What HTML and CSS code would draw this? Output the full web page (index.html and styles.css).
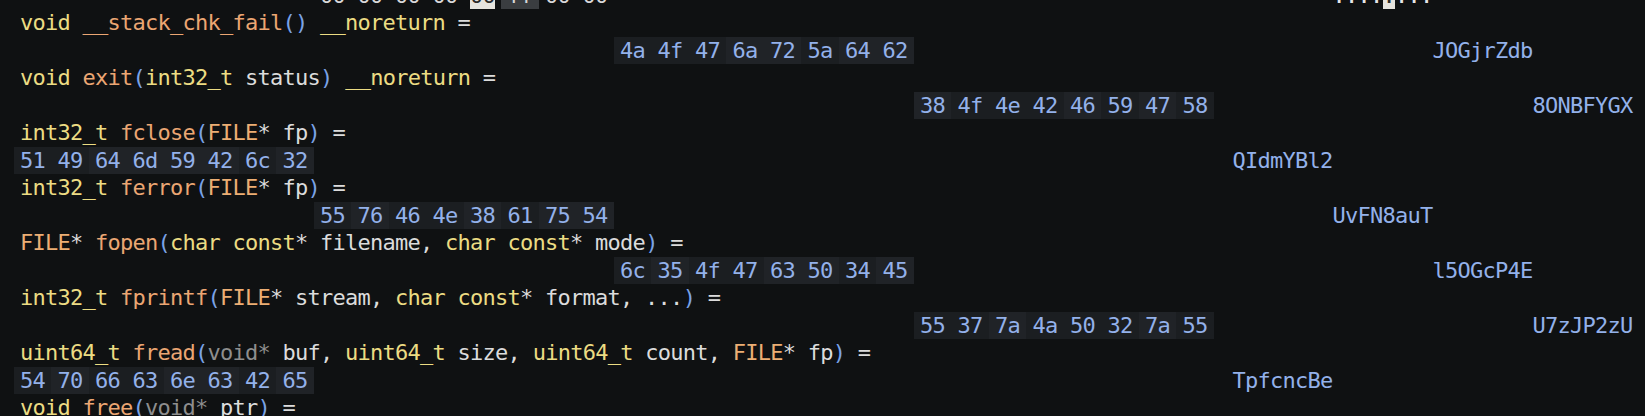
FILE: index.html
```html
<!DOCTYPE html>
<html>
<head>
<meta charset="utf-8">
<link rel="stylesheet" href="styles.css">
</head>
<body>
<div class="view">
  <div class="line hexrow">
    <div class="hexarea"><div class="group at24 plain"><span class="b">00</span><span class="b">00</span><span class="b">00</span><span class="b">00</span><span class="b"><span class="cursor">00</span></span><span class="b sel">ff</span><span class="b">00</span><span class="b">00</span></div></div>
    <div class="ascii a24 dots">....<span class="cursor">.</span>...</div>
  </div>
  <div class="line code"><span class="kw">void</span> <span class="fn">__stack_chk_fail</span><span class="p">()</span> <span class="kw">__noreturn</span> =</div>
  <div class="line hexrow">
    <div class="hexarea"><div class="group at48"><span class="b s1">4a</span><span class="b s1">4f</span><span class="b s1">47</span><span class="b s2">6a</span><span class="b s2">72</span><span class="b s1">5a</span><span class="b s2">64</span><span class="b s2">62</span></div></div>
    <div class="ascii a48">JOGjrZdb</div>
  </div>
  <div class="line code"><span class="kw">void</span> <span class="fn">exit</span><span class="p">(</span><span class="kw">int32_t</span> status<span class="p">)</span> <span class="kw">__noreturn</span> =</div>
  <div class="line hexrow">
    <div class="hexarea"><div class="group at72"><span class="b s2">38</span><span class="b s1">4f</span><span class="b s1">4e</span><span class="b s1">42</span><span class="b s2">46</span><span class="b s1">59</span><span class="b s2">47</span><span class="b s1">58</span></div></div>
    <div class="ascii a72">8ONBFYGX</div>
  </div>
  <div class="line code"><span class="kw">int32_t</span> <span class="fn">fclose</span><span class="p">(</span><span class="ty">FILE</span>* fp<span class="p">)</span> =</div>
  <div class="line hexrow">
    <div class="hexarea"><div class="group at0"><span class="b s1">51</span><span class="b s1">49</span><span class="b s2">64</span><span class="b s2">6d</span><span class="b s2">59</span><span class="b s2">42</span><span class="b s1">6c</span><span class="b s2">32</span></div></div>
    <div class="ascii a0">QIdmYBl2</div>
  </div>
  <div class="line code"><span class="kw">int32_t</span> <span class="fn">ferror</span><span class="p">(</span><span class="ty">FILE</span>* fp<span class="p">)</span> =</div>
  <div class="line hexrow">
    <div class="hexarea"><div class="group at24"><span class="b s1">55</span><span class="b s2">76</span><span class="b s1">46</span><span class="b s1">4e</span><span class="b s2">38</span><span class="b s1">61</span><span class="b s2">75</span><span class="b s2">54</span></div></div>
    <div class="ascii a24">UvFN8auT</div>
  </div>
  <div class="line code"><span class="ty">FILE</span>* <span class="fn">fopen</span><span class="p">(</span><span class="kw">char const</span>* filename, <span class="kw">char const</span>* mode<span class="p">)</span> =</div>
  <div class="line hexrow">
    <div class="hexarea"><div class="group at48"><span class="b s1">6c</span><span class="b s2">35</span><span class="b s1">4f</span><span class="b s1">47</span><span class="b s2">63</span><span class="b s2">50</span><span class="b s1">34</span><span class="b s2">45</span></div></div>
    <div class="ascii a48">l5OGcP4E</div>
  </div>
  <div class="line code"><span class="kw">int32_t</span> <span class="fn">fprintf</span><span class="p">(</span><span class="ty">FILE</span>* stream, <span class="kw">char const</span>* format, ...<span class="p">)</span> =</div>
  <div class="line hexrow">
    <div class="hexarea"><div class="group at72"><span class="b s1">55</span><span class="b s1">37</span><span class="b s2">7a</span><span class="b s1">4a</span><span class="b s1">50</span><span class="b s1">32</span><span class="b s2">7a</span><span class="b s1">55</span></div></div>
    <div class="ascii a72">U7zJP2zU</div>
  </div>
  <div class="line code"><span class="kw">uint64_t</span> <span class="fn">fread</span><span class="p">(</span><span class="dim">void*</span> buf, <span class="kw">uint64_t</span> size, <span class="kw">uint64_t</span> count, <span class="ty">FILE</span>* fp<span class="p">)</span> =</div>
  <div class="line hexrow">
    <div class="hexarea"><div class="group at0"><span class="b s1">54</span><span class="b s2">70</span><span class="b s1">66</span><span class="b s1">63</span><span class="b s2">6e</span><span class="b s2">63</span><span class="b s1">42</span><span class="b s2">65</span></div></div>
    <div class="ascii a0">TpfcncBe</div>
  </div>
  <div class="line code"><span class="kw">void</span> <span class="fn">free</span><span class="p">(</span><span class="dim">void*</span> ptr<span class="p">)</span> =</div>
</div>
</body>
</html>
```

FILE: styles.css
```css
html, body {
  margin: 0;
  padding: 0;
  background: #0f1112;
  overflow: hidden;
}

.view {
  --cw: 12.5px;
  margin-top: -18.25px;
  padding-left: 20px;
  font-family: "DejaVu Sans Mono", "Liberation Mono", monospace;
  font-size: 22px;
  letter-spacing: -0.744px;
  color: #dcdcdc;
}

.line {
  height: 27.5px;
  line-height: 27.5px;
  white-space: pre;
}

.code {
  display: block;
}

.hexrow {
  display: flex;
}

.kw { color: #ecdc83; }
.fn { color: #eba673; }
.ty { color: #ecae74; }
.p { color: #7ba3e6; }
.dim { color: #8e8e8e; }

.hexarea {
  width: calc(var(--cw) * 97);
  display: flex;
  flex: none;
}

.group {
  display: flex;
  color: #93b1ea;
}

.at0 { margin-left: calc(var(--cw) * -0.5); }
.at24 { margin-left: calc(var(--cw) * 23.5); }
.at48 { margin-left: calc(var(--cw) * 47.5); }
.at72 { margin-left: calc(var(--cw) * 71.5); }

.b {
  padding: 0 calc(var(--cw) * 0.5);
  height: 27.5px;
}

.s1 { background: #1b1e21; }
.s2 { background: #202327; }

.plain { color: #d8d8d8; }
.plain .b { background: transparent; }
.plain .sel { background: #3a3d40; }

.cursor {
  background: #e6e4de;
  color: #2a2a2a;
  display: inline-block;
  height: 27.5px;
}

.ascii {
  color: #93b1ea;
}

.ascii.dots { color: #e6e6e6; }

.a0 { padding-left: 0; }
.a24 { padding-left: calc(var(--cw) * 8); }
.a48 { padding-left: calc(var(--cw) * 16); }
.a72 { padding-left: calc(var(--cw) * 24); }
```
